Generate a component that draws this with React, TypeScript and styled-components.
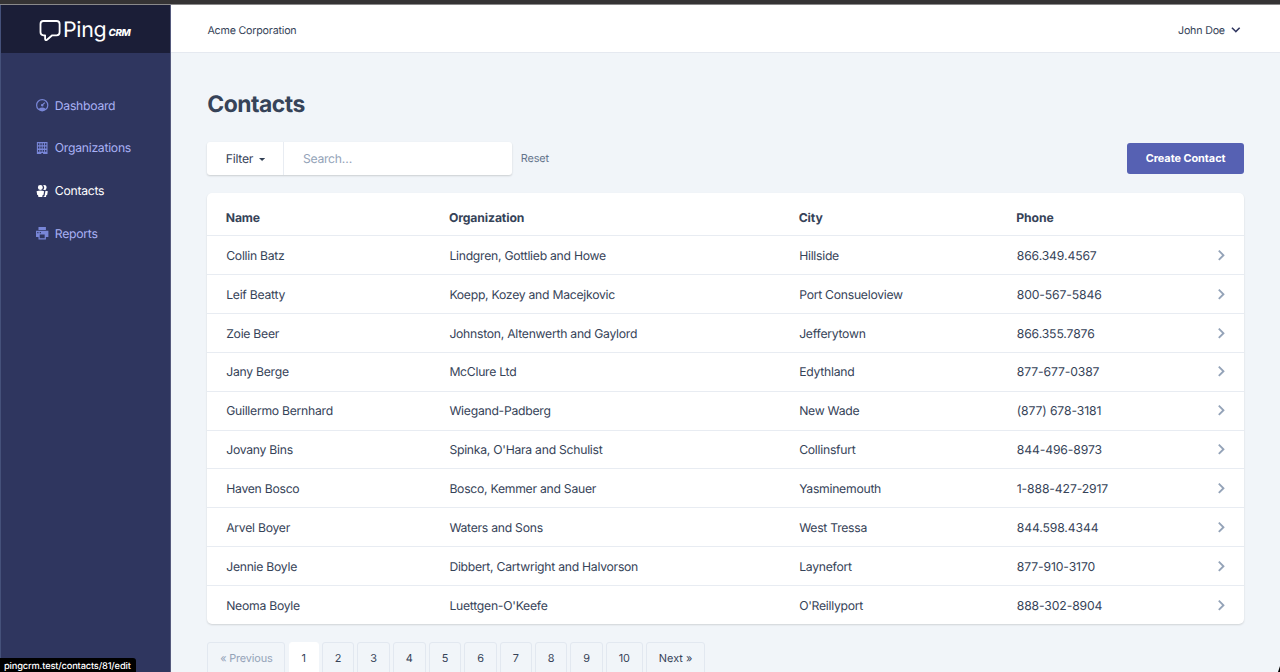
import React from 'react';
import styled, { createGlobalStyle } from 'styled-components';

const GlobalStyle = createGlobalStyle`
  *, *::before, *::after { box-sizing: border-box; }
  body {
    margin: 0;
    overflow: hidden;
    background: #f1f5f9;
    color: #364358;
    font: 400 12.2px/18.66px Inter, 'Liberation Sans', sans-serif;
    letter-spacing: -0.26px;
    text-rendering: geometricPrecision;
    -webkit-font-smoothing: antialiased;
  }
  h1 { margin: 0; }
  button, input { font: inherit; color: inherit; letter-spacing: inherit; text-rendering: inherit; }
  a { color: inherit; text-decoration: none; }
`;

const Page = styled.div`
  display: flex;
  flex-direction: column;
  height: 672px;
  overflow: hidden;
`;

const WindowEdge = styled.div`
  flex: none;
  height: 5px;
  background: #353334;
  border-bottom: 1px solid #8a898a;
`;

const Columns = styled.div`
  display: flex;
  flex: 1;
  min-height: 0;
`;

const Sidebar = styled.aside`
  flex: none;
  width: 171px;
  background: #2f365f;
  border-left: 1px solid #45517a;
  border-right: 1px solid #555a7d;
`;

const Brand = styled.div`
  display: flex;
  height: 48px;
  padding: 14px 0 0 38px;
  background: #1b1e37;
  color: #fff;
`;

const BrandMark = styled.svg`
  flex: none;
  width: 22px;
  height: 23px;
`;

const BrandName = styled.span`
  margin: -2px 0 0 2px;
  font-size: 21.4px;
  font-weight: 400;
  line-height: 26px;
  letter-spacing: -0.3px;
`;

const BrandSuffix = styled.span`
  margin: 7px 0 0 2px;
  font-size: 9.8px;
  font-weight: 800;
  font-style: italic;
  line-height: 16px;
  letter-spacing: -0.3px;
`;

const Nav = styled.nav`
  display: flex;
  flex-direction: column;
  gap: 24px;
  padding: 43px 0 0 35.4px;
`;

const NavLink = styled.a<{ $active?: boolean }>`
  display: flex;
  align-items: center;
  gap: 6px;
  height: 18.7px;
  color: ${p => (p.$active ? '#fff' : '#a9b1f5')};

  svg {
    width: 12.4px;
    height: 12.4px;
    fill: ${p => (p.$active ? '#fff' : '#7886d7')};
    fill-rule: evenodd;
  }

  span {
    padding-top: 1.4px;
  }
`;

const Main = styled.main`
  display: flex;
  flex: 1;
  flex-direction: column;
  min-width: 0;
`;

const TopBar = styled.header`
  display: flex;
  flex: none;
  align-items: center;
  justify-content: space-between;
  height: 48px;
  padding: 3px 36.5px 0 36.4px;
  background: #fff;
  border-bottom: 1px solid #e5e9f0;
  font-size: 10.7px;
  letter-spacing: -0.2px;

  span {
    padding-top: 2px;
  }
`;

const UserMenu = styled.div`
  display: flex;
  align-items: center;
  gap: 3px;

  svg {
    width: 15.6px;
    height: 15.6px;
    fill: #2f365f;
  }
`;

const Content = styled.div`
  padding: 36px 36.2px 0 36.3px;
`;

const Title = styled.h1`
  height: 53px;
  font-size: 22.9px;
  font-weight: 700;
  line-height: 31px;
  letter-spacing: -0.5px;
`;

const Toolbar = styled.div`
  display: flex;
  align-items: center;
  justify-content: space-between;
  height: 33px;
  margin-bottom: 18px;
`;

const SearchGroup = styled.div`
  display: flex;
  align-items: center;
`;

const SearchBox = styled.div`
  display: flex;
  width: 305px;
  height: 33px;
  overflow: hidden;
  background: #fff;
  border-radius: 3px;
  box-shadow: 0 1px 2px rgba(0, 0, 0, 0.16);
`;

const FilterButton = styled.button`
  display: flex;
  align-items: center;
  gap: 6px;
  flex: none;
  width: 77px;
  padding: 2px 0 0 18.5px;
  background: none;
  border: 0;
  border-right: 1px solid #e8ecf2;

  svg {
    width: 6.2px;
    height: 4px;
    margin-top: 1px;
    fill: #334155;
  }
`;

const SearchInput = styled.input`
  flex: 1;
  min-width: 0;
  padding: 1px 18.6px 0;
  background: none;
  border: 0;

  &::placeholder {
    color: #94a3b8;
    opacity: 1;
  }
`;

const ResetLink = styled.a`
  margin-left: 8.5px;
  color: #64748b;
  font-size: 10.9px;
  letter-spacing: -0.15px;
`;

const PrimaryButton = styled.button`
  width: 116.5px;
  height: 31px;
  padding: 0;
  background: #5661b3;
  border: 0;
  border-radius: 3px;
  color: #fff;
  font-size: 10.9px;
  font-weight: 700;
  letter-spacing: -0.04px;
`;

const Table = styled.div`
  height: 431px;
  background: #fff;
  border-radius: 5px;
  box-shadow: 0 1px 2px rgba(0, 0, 0, 0.14);
`;

const Row = styled.div<{ $head?: boolean }>`
  display: grid;
  grid-template-columns: 223.2px 349.8px 217.6px 1fr 30px;
  align-items: center;
  height: ${p => (p.$head ? '42.3px' : '38.87px')};
  padding: ${p => (p.$head ? '5.8px 0 0 18.4px' : '0 0 0 18.9px')};
  border-top: ${p => (p.$head ? '0' : '1px solid #e8ecf2')};
  font-weight: ${p => (p.$head ? 700 : 400)};
  letter-spacing: ${p => (p.$head ? '-0.1px' : '-0.26px')};

  svg {
    width: 18.66px;
    height: 18.66px;
    margin-left: -1.7px;
    fill: #94a3b8;
  }
`;

const Cell = styled.span<{ $numeric?: boolean }>`
  padding-top: 2px;
  letter-spacing: ${p => (p.$numeric ? '-0.12px' : 'inherit')};
`;

const Pagination = styled.div`
  display: flex;
  gap: 3.2px;
  margin-top: 18px;
`;

const PageLink = styled.a<{ $state?: 'active' | 'disabled'; $wide?: boolean }>`
  flex: none;
  height: 36px;
  padding: 10px 11.9px 0;
  border: 1px solid ${p => (p.$state === 'active' ? '#fff' : '#e2e8f0')};
  border-radius: 3px;
  background: ${p => (p.$state === 'active' ? '#fff' : 'transparent')};
  color: ${p => (p.$state === 'disabled' ? '#94a3b8' : '#364358')};
  font-size: 10.9px;
  line-height: 11px;
  letter-spacing: ${p => (p.$wide ? '0' : '-0.15px')};
`;

const StatusUrl = styled.div`
  position: absolute;
  left: 0;
  bottom: 0;
  width: 136px;
  height: 14px;
  padding-left: 4px;
  background: #000;
  border-top-right-radius: 3px;
  color: #fff;
  font-size: 9.3px;
  font-weight: 500;
  line-height: 17px;
  letter-spacing: -0.17px;
  white-space: nowrap;
`;

const Frame = styled.div`
  position: relative;
  width: 1280px;
  height: 672px;
  overflow: hidden;
`;

const WindowCorner = styled.svg`
  position: absolute;
  right: 0;
  bottom: 0;
  width: 2px;
  height: 6px;
`;

const navItems = [
  {
    label: 'Dashboard',
    box: '0 0 20 20',
    path: 'M10 20a10 10 0 1 1 0-20 10 10 0 0 1 0 20zm-5.6-4.29a9.95 9.95 0 0 1 11.2 0 8 8 0 1 0-11.2 0zm6.12-7.64l3.02-3.02 1.41 1.41-3.02 3.02a2 2 0 1 1-1.41-1.41z',
  },
  {
    label: 'Organizations',
    box: '0 0 100 100',
    path: 'M7 0h86v100H57.108V88.418H42.892V100H7V0zm9 64h11v15H16V64zm57 0h11v15H73V64zm-19 0h11v15H54V64zm-19 0h11v15H35V64zM16 37h11v15H16V37zm57 0h11v15H73V37zm-19 0h11v15H54V37zm-19 0h11v15H35V37zM16 11h11v15H16V11zm57 0h11v15H73V11zm-19 0h11v15H54V11zm-19 0h11v15H35V11z',
  },
  {
    label: 'Contacts',
    box: '0 0 20 20',
    active: true,
    path: 'M7 8a4 4 0 1 1 0-8 4 4 0 0 1 0 8zm0 1c2.15 0 4.2.4 6.1 1.09L12 16h-1.25L10 20H4l-.75-4H2L.9 10.09A17.93 17.93 0 0 1 7 9zm8.31.17c1.32.18 2.59.48 3.8.92L18 16h-1.25L16 20h-3.96l.37-2h1.25l1.65-8.83zM13 0a4 4 0 1 1-1.33 7.76 5.96 5.96 0 0 0 0-7.52C12.1.1 12.53 0 13 0z',
  },
  {
    label: 'Reports',
    box: '0 0 20 20',
    path: 'M4 16H0V6h20v10h-4v4H4v-4zm2-4v6h8v-6H6zM4 0h12v5H4V0zM2 8v2h2V8H2zm4 0v2h2V8H6z',
  },
];

const contacts = [
  ['Collin Batz', 'Lindgren, Gottlieb and Howe', 'Hillside', '866.349.4567'],
  ['Leif Beatty', 'Koepp, Kozey and Macejkovic', 'Port Consueloview', '800-567-5846'],
  ['Zoie Beer', 'Johnston, Altenwerth and Gaylord', 'Jefferytown', '866.355.7876'],
  ['Jany Berge', 'McClure Ltd', 'Edythland', '877-677-0387'],
  ['Guillermo Bernhard', 'Wiegand-Padberg', 'New Wade', '(877) 678-3181'],
  ['Jovany Bins', "Spinka, O'Hara and Schulist", 'Collinsfurt', '844-496-8973'],
  ['Haven Bosco', 'Bosco, Kemmer and Sauer', 'Yasminemouth', '1-888-427-2917'],
  ['Arvel Boyer', 'Waters and Sons', 'West Tressa', '844.598.4344'],
  ['Jennie Boyle', 'Dibbert, Cartwright and Halvorson', 'Laynefort', '877-910-3170'],
  ['Neoma Boyle', "Luettgen-O'Keefe", "O'Reillyport", '888-302-8904'],
];

const pages = ['1', '2', '3', '4', '5', '6', '7', '8', '9', '10'];

export default function App() {
  return (
    <Frame>
      <GlobalStyle />
      <Page>
        <WindowEdge />
        <Columns>
          <Sidebar>
            <Brand>
              <BrandMark viewBox="0 0 22 23" fill="none" stroke="currentColor" strokeWidth="1.8" strokeLinejoin="round">
                <path d="M4.400 2h13.200a3 3 0 0 1 3 3v8.300a3 3 0 0 1-3 3h-4.400L8 20.800c-.8.7-1.900.3-1.900-.7v-3.800H4.400c-1.800-.2-2.900-1.300-2.900-3V5a3 3 0 0 1 2.900-3z" />
              </BrandMark>
              <BrandName>Ping</BrandName>
              <BrandSuffix>CRM</BrandSuffix>
            </Brand>
            <Nav>
              {navItems.map(item => (
                <NavLink key={item.label} $active={item.active}>
                  <svg viewBox={item.box}><path d={item.path} /></svg>
                  <span>{item.label}</span>
                </NavLink>
              ))}
            </Nav>
          </Sidebar>
          <Main>
            <TopBar>
              <span>Acme Corporation</span>
              <UserMenu>
                <span>John Doe</span>
                <svg viewBox="0 0 20 20"><path d="M9.293 12.950l.707.707L15.657 8l-1.414-1.414L10 10.828 5.757 6.586 4.343 8z" /></svg>
              </UserMenu>
            </TopBar>
            <Content>
              <Title>Contacts</Title>
              <Toolbar>
                <SearchGroup>
                  <SearchBox>
                    <FilterButton>
                      Filter
                      <svg viewBox="0 0 961 600"><path d="M240 240L0 0h961L721 240C589 372 481 480 480.600 480 480 480 372 372 240 240z" /></svg>
                    </FilterButton>
                    <SearchInput placeholder="Search…" />
                  </SearchBox>
                  <ResetLink>Reset</ResetLink>
                </SearchGroup>
                <PrimaryButton>Create Contact</PrimaryButton>
              </Toolbar>
              <Table>
                <Row $head>
                  <Cell>Name</Cell>
                  <Cell>Organization</Cell>
                  <Cell>City</Cell>
                  <Cell>Phone</Cell>
                </Row>
                {contacts.map(cells => (
                  <Row key={cells[0]}>
                    {cells.map((cell, column) => <Cell key={cell} $numeric={column === 3}>{cell}</Cell>)}
                    <svg viewBox="0 0 20 20"><path d="M12.950 10.707l.707-.707L8 4.343 6.586 5.757 10.828 10l-4.242 4.243L8 15.657z" /></svg>
                  </Row>
                ))}
              </Table>
              <Pagination>
                <PageLink $state="disabled">« Previous</PageLink>
                {pages.map(page => (
                  <PageLink key={page} $state={page === '1' ? 'active' : undefined}>{page}</PageLink>
                ))}
                <PageLink $wide>Next »</PageLink>
              </Pagination>
            </Content>
          </Main>
        </Columns>
      </Page>
      <StatusUrl>pingcrm.test/contacts/81/edit</StatusUrl>
      <WindowCorner viewBox="0 0 2 6"><path d="M2 0v6H0z" fill="#000" /></WindowCorner>
    </Frame>
  );
}
